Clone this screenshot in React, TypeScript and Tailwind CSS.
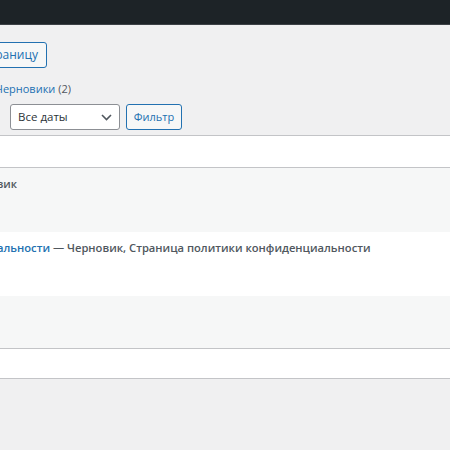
import { ReactNode } from 'react';

function Clip({ className, children }: { className: string; children: ReactNode }) {
  // right-aligned box that hides whatever spills out on the left
  return (
    <span className={`flex shrink-0 justify-end overflow-hidden whitespace-nowrap ${className}`}>
      <span className="shrink-0">{children}</span>
    </span>
  );
}

export default function App() {
  return (
    <div className="min-h-screen bg-[#f0f0f1] font-['Open_Sans','Noto_Sans',sans-serif] text-[11px] text-[#3c434a]">
      <div className="h-[25px] border-b border-[#3c4146] bg-[#1d2327]" />

      <div className="pt-[17px]">
        <Clip className="w-[47px]">
          <span className="flex h-[26px] items-center rounded-[3px] border border-[#2271b1] bg-[#f6f7f7] px-[8px] text-[12px] text-[#2271b1]">
            Добавить страницу
          </span>
        </Clip>

        <div className="mt-[13px] flex h-[16px] items-center">
          <Clip className="w-[71px]">
            <span className="text-[#2271b1]">Черновики</span>{' '}
            <span className="text-[#50575e]">(2)</span>
          </Clip>
        </div>

        <div className="mt-[7px] flex items-center gap-[6px] pl-[10px]">
          <div className="flex h-[26px] w-[110px] items-center justify-between rounded-[3px] border border-[#8c8f94] bg-white pl-[7px] pr-[7px] text-[11.5px] text-[#2c3338]">
            <span>Все даты</span>
            <svg width="11" height="7" viewBox="0 0 11 7" fill="none">
              <path d="M1 1l4.5 4.5L10 1" stroke="#50575e" strokeWidth="1.6" />
            </svg>
          </div>
          <button className="flex h-[26px] w-[56px] items-center justify-center rounded-[3px] border border-[#2271b1] bg-[#f6f7f7] text-[11px] text-[#2271b1]">
            Фильтр
          </button>
        </div>
      </div>

      <div className="mt-[5px] border-y border-[#c3c4c7] bg-white">
        <div className="h-[32px] border-b border-[#c3c4c7]" />

        <div className="h-[64px] bg-[#f6f7f7] pt-[8px]">
          <div className="flex h-[16px] items-center font-semibold text-[#50575e]">
            <Clip className="w-[17px]">— Черновик</Clip>
          </div>
        </div>

        <div className="h-[64px] bg-white pt-[8px]">
          <div className="flex h-[16px] items-center whitespace-nowrap text-[11.2px] font-semibold">
            <Clip className="w-[50px]">
              <span className="text-[#2271b1]">Политика конфиденциальности</span>
            </Clip>
            <span className="text-[#50575e]">&nbsp;— Черновик, Страница политики конфиденциальности</span>
          </div>
        </div>

        <div className="h-[52px] bg-[#f6f7f7]" />

        <div className="h-[30px] border-t border-[#c3c4c7] bg-white" />
      </div>
    </div>
  );
}
